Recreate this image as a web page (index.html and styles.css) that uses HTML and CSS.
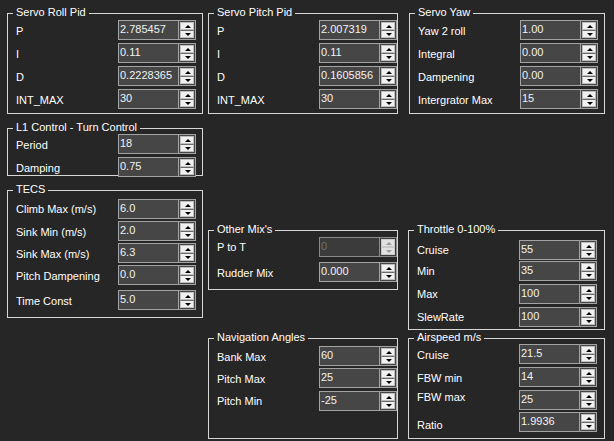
FILE: index.html
```html
<!DOCTYPE html>
<html>
<head>
<meta charset="utf-8">
<link rel="stylesheet" href="styles.css">
</head>
<body>
<div class="form">
  <div class="col col1">
    <div class="group g-roll">
      <div class="title">Servo Roll Pid</div>
      <div class="body p6 gap3">
        <div class="row"><span class="lbl">P</span><div class="num"><span class="val">2.785457</span><div class="spin"><i class="up"></i><i class="dn"></i></div></div></div>
        <div class="row"><span class="lbl">I</span><div class="num"><span class="val">0.11</span><div class="spin"><i class="up"></i><i class="dn"></i></div></div></div>
        <div class="row"><span class="lbl">D</span><div class="num"><span class="val">0.2228365</span><div class="spin"><i class="up"></i><i class="dn"></i></div></div></div>
        <div class="row"><span class="lbl">INT_MAX</span><div class="num"><span class="val">30</span><div class="spin"><i class="up"></i><i class="dn"></i></div></div></div>
      </div>
    </div>
    <div class="group g-l1">
      <div class="title">L1 Control - Turn Control</div>
      <div class="body p5 gap3">
        <div class="row"><span class="lbl">Period</span><div class="num"><span class="val">18</span><div class="spin"><i class="up"></i><i class="dn"></i></div></div></div>
        <div class="row"><span class="lbl">Damping</span><div class="num"><span class="val">0.75</span><div class="spin"><i class="up"></i><i class="dn"></i></div></div></div>
      </div>
    </div>
    <div class="group g-tecs">
      <div class="title">TECS</div>
      <div class="body p8 gap2">
        <div class="row"><span class="lbl hi">Climb Max (m/s)</span><div class="num"><span class="val">6.0</span><div class="spin"><i class="up"></i><i class="dn"></i></div></div></div>
        <div class="row"><span class="lbl">Sink Min (m/s)</span><div class="num"><span class="val">2.0</span><div class="spin"><i class="up"></i><i class="dn"></i></div></div></div>
        <div class="row"><span class="lbl">Sink Max (m/s)</span><div class="num"><span class="val">6.3</span><div class="spin"><i class="up"></i><i class="dn"></i></div></div></div>
        <div class="row"><span class="lbl">Pitch Dampening</span><div class="num"><span class="val">0.0</span><div class="spin"><i class="up"></i><i class="dn"></i></div></div></div>
        <div class="row extra"><span class="lbl">Time Const</span><div class="num"><span class="val">5.0</span><div class="spin"><i class="up"></i><i class="dn"></i></div></div></div>
      </div>
    </div>
  </div>

  <div class="col col2">
    <div class="group g-pitch">
      <div class="title">Servo Pitch Pid</div>
      <div class="body p6 gap3">
        <div class="row"><span class="lbl">P</span><div class="num"><span class="val">2.007319</span><div class="spin"><i class="up"></i><i class="dn"></i></div></div></div>
        <div class="row"><span class="lbl">I</span><div class="num"><span class="val">0.11</span><div class="spin"><i class="up"></i><i class="dn"></i></div></div></div>
        <div class="row"><span class="lbl">D</span><div class="num"><span class="val">0.1605856</span><div class="spin"><i class="up"></i><i class="dn"></i></div></div></div>
        <div class="row"><span class="lbl">INT_MAX</span><div class="num"><span class="val">30</span><div class="spin"><i class="up"></i><i class="dn"></i></div></div></div>
      </div>
    </div>
    <div class="group g-mix">
      <div class="title">Other Mix's</div>
      <div class="body p6 gap5">
        <div class="row"><span class="lbl hi">P to T</span><div class="num disabled"><span class="val">0</span><div class="spin"><i class="up"></i><i class="dn"></i></div></div></div>
        <div class="row"><span class="lbl">Rudder Mix</span><div class="num"><span class="val">0.000</span><div class="spin"><i class="up"></i><i class="dn"></i></div></div></div>
      </div>
    </div>
    <div class="group g-nav">
      <div class="title">Navigation Angles</div>
      <div class="body p7 gap2">
        <div class="row"><span class="lbl">Bank Max</span><div class="num"><span class="val">60</span><div class="spin"><i class="up"></i><i class="dn"></i></div></div></div>
        <div class="row"><span class="lbl">Pitch Max</span><div class="num"><span class="val">25</span><div class="spin"><i class="up"></i><i class="dn"></i></div></div></div>
        <div class="row gap-3"><span class="lbl hi">Pitch Min</span><div class="num"><span class="val">-25</span><div class="spin"><i class="up"></i><i class="dn"></i></div></div></div>
      </div>
    </div>
  </div>

  <div class="col col3">
    <div class="group g-yaw">
      <div class="title">Servo Yaw</div>
      <div class="body p6 gap3">
        <div class="row"><span class="lbl">Yaw 2 roll</span><div class="num"><span class="val">1.00</span><div class="spin"><i class="up"></i><i class="dn"></i></div></div></div>
        <div class="row"><span class="lbl">Integral</span><div class="num"><span class="val">0.00</span><div class="spin"><i class="up"></i><i class="dn"></i></div></div></div>
        <div class="row"><span class="lbl">Dampening</span><div class="num"><span class="val">0.00</span><div class="spin"><i class="up"></i><i class="dn"></i></div></div></div>
        <div class="row"><span class="lbl">Intergrator Max</span><div class="num"><span class="val">15</span><div class="spin"><i class="up"></i><i class="dn"></i></div></div></div>
      </div>
    </div>
    <div class="group g-thr">
      <div class="title">Throttle 0-100%</div>
      <div class="body p9 gap3">
        <div class="row first-2"><span class="lbl hi">Cruise</span><div class="num"><span class="val">55</span><div class="spin"><i class="up"></i><i class="dn"></i></div></div></div>
        <div class="row gap-2"><span class="lbl hi">Min</span><div class="num"><span class="val">35</span><div class="spin"><i class="up"></i><i class="dn"></i></div></div></div>
        <div class="row"><span class="lbl hi">Max</span><div class="num"><span class="val">100</span><div class="spin"><i class="up"></i><i class="dn"></i></div></div></div>
        <div class="row"><span class="lbl hi">SlewRate</span><div class="num"><span class="val">100</span><div class="spin"><i class="up"></i><i class="dn"></i></div></div></div>
      </div>
    </div>
    <div class="group g-air">
      <div class="title">Airspeed m/s</div>
      <div class="body p5 gap3">
        <div class="row"><span class="lbl">Cruise</span><div class="num"><span class="val">21.5</span><div class="spin"><i class="up"></i><i class="dn"></i></div></div></div>
        <div class="row"><span class="lbl">FBW min</span><div class="num"><span class="val">14</span><div class="spin"><i class="up"></i><i class="dn"></i></div></div></div>
        <div class="row"><span class="lbl up4">FBW max</span><div class="num"><span class="val">25</span><div class="spin"><i class="up"></i><i class="dn"></i></div></div></div>
        <div class="row gap-2"><span class="lbl low">Ratio</span><div class="num"><span class="val">1.9936</span><div class="spin"><i class="up"></i><i class="dn"></i></div></div></div>
      </div>
    </div>
  </div>
</div>
</body>
</html>
```

FILE: styles.css
```css
html, body {
  margin: 0;
  padding: 0;
  background: #262626;
  width: 614px;
  height: 441px;
  overflow: hidden;
}

body {
  font-family: "Liberation Sans", Arial, sans-serif;
  font-size: 11px;
  color: #ffffff;
}

.form {
  display: flex;
  padding-left: 7px;
}

.col {
  display: flex;
  flex-direction: column;
}

.col1 { width: 196px; }
.col2 { width: 190px; margin-left: 5px; }
.col3 { width: 197px; margin-left: 10px; }

.group {
  box-sizing: border-box;
  border: 1px solid #d6d6d6;
  display: flex;
  flex-direction: column;
}

.title {
  align-self: flex-start;
  line-height: 13px;
  margin: -8px 0 -5px 5px;
  padding: 0 3px;
  background: #262626;
  white-space: nowrap;
}

/* group placement and size */
.g-roll, .g-pitch { margin-top: 13px; height: 101px; }
.g-yaw { margin-top: 13px; height: 101px; margin-left: 1px; }
.g-l1 { margin-top: 14px; height: 48px; }
.g-tecs { margin-top: 14px; height: 128px; }
.g-mix { margin-top: 116px; height: 60px; }
.g-nav { margin-top: 48px; height: 101px; }
.g-thr { margin-top: 116px; height: 100px; }
.g-air { margin-top: 8px; height: 101px; }

.body {
  display: flex;
  flex-direction: column;
  padding-left: 8px;
}
.p5 { padding-top: 5px; }
.p6 { padding-top: 6px; }
.p7 { padding-top: 7px; }
.p8 { padding-top: 8px; }
.p9 { padding-top: 9px; }
.gap2 { gap: 2px; }
.gap3 { gap: 3px; }
.gap5 { gap: 5px; }

.row {
  display: flex;
  align-items: flex-start;
  height: 20px;
}
.row.extra { margin-top: 3px; }
.row.gap-3 { margin-top: 1px; }
.row.gap-2 { margin-top: -1px; }
.row.first-2 { margin-bottom: -1px; }

.lbl {
  width: 102px;
  flex: none;
  line-height: 13px;
  padding-top: 5px;
  white-space: nowrap;
}
.lbl.hi { padding-top: 4px; }
.lbl.up4 { padding-top: 1px; }
.lbl.low { padding-top: 7px; }

/* numeric up/down */
.num {
  box-sizing: border-box;
  display: flex;
  width: 78px;
  height: 20px;
  border: 1px solid #a3a3a3;
  background: #464646;
}

.val {
  flex: 1;
  line-height: 13px;
  padding: 2px 0 0 1px;
  color: #f2f2f2;
  white-space: nowrap;
  overflow: hidden;
}

.spin {
  box-sizing: border-box;
  flex: none;
  width: 17px;
  height: 18px;
  border-left: 1px solid #a3a3a3;
  display: flex;
  flex-direction: column;
  padding: 1px;
  background: #464646;
}

.spin i {
  flex: 1;
  position: relative;
  background: #f0f0f0;
  border: 1px solid #bdbdbd;
}
.spin i + i { margin-top: 0; border-top-color: #6a6a6a; }

.spin i::after {
  content: "";
  position: absolute;
  left: 4px;
  width: 0;
  height: 0;
  border-left: 3px solid transparent;
  border-right: 3px solid transparent;
}
.spin .up::after {
  top: 2px;
  border-bottom: 3px solid #000;
}
.spin .dn::after {
  top: 2px;
  border-top: 3px solid #000;
}

/* disabled state */
.num.disabled {
  background: #3b3b3b;
  border-color: #8a8a8a;
}
.num.disabled .val { color: #707070; }
.num.disabled .spin { background: #3b3b3b; border-left-color: #8a8a8a; }
.num.disabled .spin i { background: #e2e2e2; border-color: #c9c9c9; }
.num.disabled .spin .up::after { border-bottom-color: #9a9a9a; }
.num.disabled .spin .dn::after { border-top-color: #9a9a9a; }
```
